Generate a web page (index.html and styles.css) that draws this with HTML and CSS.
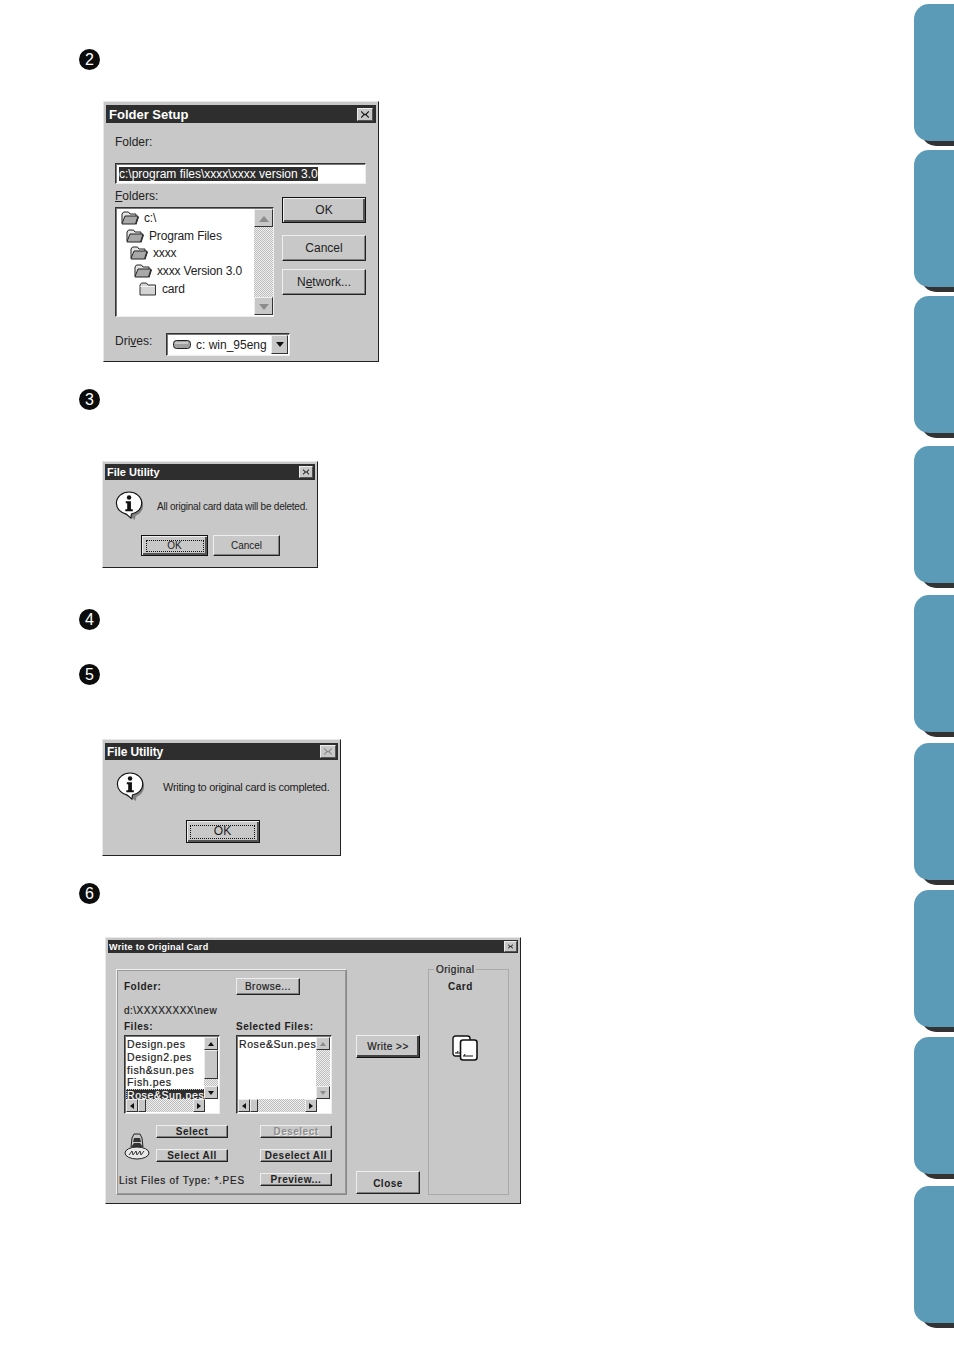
FILE: index.html
```html
<!DOCTYPE html>
<html lang="en">

<head>
    <meta charset="UTF-8">
    <link rel="stylesheet" href="styles.css">
    <title>Write to Original Card</title>
</head>

<body>
    <svg class="defs" width="0" height="0">
        <symbol id="folder-open" viewBox="0 0 18 14">
            <path d="M1 12V3l1.500-2h5L9 3h6v2" fill="#e4e4e4" stroke="#222" />
            <path d="M1 12.500l3-7.500h13l-2.500 8H1z" fill="#a8a8a8" stroke="#222" />
            <path d="M14.500 13.500l2.500-8 1 .5-2.500 7.500z" fill="#222" />
        </symbol>
        <symbol id="folder-closed" viewBox="0 0 18 14">
            <path d="M1 13V3l1.500-2h5L9 3h7.500v10z" fill="#d4d4d4" stroke="#333" />
            <path d="M1.500 4.500h14.500" stroke="#f4f4f4" />
        </symbol>
        <symbol id="info" viewBox="0 0 32 32">
            <path d="M17 3c7 0 13 5 13 12 0 6-4 10-8 11.500l-1 4.500-5-4C9 26 4 21 4 15 4 8 10 3 17 3z" fill="#808080" />
            <path d="M15 1C8 1 1.500 6 1.500 13c0 6 5 10.500 10.500 11.500l5 4.500.5-4.500c6-1 11-5.500 11-11.500C28.500 6 22 1 15 1z"
                fill="#fff" stroke="#111" stroke-width="1.200" />
            <circle cx="15" cy="6.800" r="2.400" fill="#111" />
            <path d="M11.500 11h5.500v8.500h2v2h-8v-2h2V13h-1.500z" fill="#111" />
        </symbol>
        <symbol id="x-mark" viewBox="0 0 10 8">
            <path d="M1 0l3 3h2l3-3h1v1L7 4l3 3v1H9L6 5H4L1 8H0V7l3-3-3-3V0z" fill="currentColor" />
        </symbol>
    </svg>

    <main class="page">
        <div class="badge badge-2">2</div>

        <section class="dlg folder-setup">
            <div class="titlebar">
                <span>Folder Setup</span>
                <span class="close"><svg><use href="#x-mark" /></svg></span>
            </div>
            <div class="fs-body">
                <div class="fs-label">Folder:</div>
                <div class="fs-input"><span class="fs-selected">c:\program files\xxxx\xxxx version 3.0</span></div>
                <div class="fs-main">
                    <div class="fs-left">
                        <div class="fs-label-2"><u>F</u>olders:</div>
                        <div class="tree">
                            <div class="tree-rows">
                                <div class="tree-row lvl0"><svg class="folder"><use href="#folder-open" /></svg>c:\</div>
                                <div class="tree-row lvl1"><svg class="folder"><use href="#folder-open" /></svg>Program Files</div>
                                <div class="tree-row lvl2"><svg class="folder"><use href="#folder-open" /></svg>xxxx</div>
                                <div class="tree-row lvl3"><svg class="folder"><use href="#folder-open" /></svg>xxxx Version 3.0</div>
                                <div class="tree-row lvl4"><svg class="folder"><use href="#folder-closed" /></svg>card</div>
                            </div>
                            <div class="vscroll fs-scroll">
                                <span class="arrow up off"></span>
                                <span class="dither"></span>
                                <span class="arrow down off"></span>
                            </div>
                        </div>
                    </div>
                    <div class="fs-buttons">
                        <div class="btn btn-default">OK</div>
                        <div class="btn">Cancel</div>
                        <div class="btn">N<u>e</u>twork...</div>
                    </div>
                </div>
                <div class="fs-drives">
                    <div class="fs-drives-label">Dri<u>v</u>es:</div>
                    <div class="combo">
                        <svg class="drive" viewBox="0 0 18 9">
                            <rect x=".5" y=".5" width="17" height="8" rx="3" fill="#a0a0a0" stroke="#222" />
                            <path d="M2 3h13" stroke="#f0f0f0" />
                        </svg>
                        <span>c: win_95eng</span>
                        <span class="arrow down combo-arrow"></span>
                    </div>
                </div>
            </div>
        </section>

        <div class="badge badge-3">3</div>

        <section class="dlg util-delete">
            <div class="titlebar small">
                <span>File Utility</span>
                <span class="close"><svg><use href="#x-mark" /></svg></span>
            </div>
            <div class="msg">
                <svg class="info"><use href="#info" /></svg>
                <span class="msg-text">All original card data will be deleted.</span>
            </div>
            <div class="msg-buttons">
                <div class="btn btn-default btn-focus"><span>OK</span></div>
                <div class="btn">Cancel</div>
            </div>
        </section>

        <div class="badge badge-4">4</div>
        <div class="badge badge-5">5</div>

        <section class="dlg util-done">
            <div class="titlebar">
                <span>File Utility</span>
                <span class="close close-off"><svg><use href="#x-mark" /></svg></span>
            </div>
            <div class="msg">
                <svg class="info"><use href="#info" /></svg>
                <span class="msg-text">Writing to original card is completed.</span>
            </div>
            <div class="msg-buttons">
                <div class="btn btn-default btn-focus"><span>OK</span></div>
            </div>
        </section>

        <div class="badge badge-6">6</div>

        <section class="dlg write-card">
            <div class="titlebar tiny">
                <span>Write to Original Card</span>
                <span class="close"><svg><use href="#x-mark" /></svg></span>
            </div>
            <div class="wc-body">
                <div class="wc-group">
                    <div class="wc-top">
                        <div class="wc-strong">Folder:</div>
                        <div class="btn">Browse...</div>
                        <div class="wc-path">d:\XXXXXXXX\new</div>
                        <div class="wc-strong">Files:</div>
                        <div class="wc-strong">Selected Files:</div>
                        <div class="list">
                            <div class="list-items">
                                <div>Design.pes</div>
                                <div>Design2.pes</div>
                                <div>fish&amp;sun.pes</div>
                                <div>Fish.pes</div>
                                <div class="list-selected">Rose&amp;Sun.pes</div>
                            </div>
                            <div class="vscroll">
                                <span class="arrow up"></span>
                                <span class="thumb"></span>
                                <span class="dither"></span>
                                <span class="arrow down"></span>
                            </div>
                            <div class="hscroll">
                                <span class="arrow left"></span>
                                <span class="thumb"></span>
                                <span class="dither"></span>
                                <span class="arrow right"></span>
                            </div>
                        </div>
                        <div class="list">
                            <div class="list-items">
                                <div>Rose&amp;Sun.pes</div>
                            </div>
                            <div class="vscroll">
                                <span class="arrow up off"></span>
                                <span class="dither"></span>
                                <span class="arrow down off"></span>
                            </div>
                            <div class="hscroll">
                                <span class="arrow left"></span>
                                <span class="thumb"></span>
                                <span class="dither"></span>
                                <span class="arrow right"></span>
                            </div>
                        </div>
                    </div>
                    <div class="wc-actions">
                        <svg class="logo" viewBox="0 0 26 30">
                            <path d="M10 2h6l2 4 1 9H7l1-9z" fill="#c8c8c8" stroke="#222" />
                            <path d="M10 6h6l1 4H9zM7 15l3-4h6l3 4z" fill="#333" />
                            <ellipse cx="13" cy="21" rx="12" ry="6" fill="#e8e8e8" stroke="#222" />
                            <path d="M5 23l3-4 1 4 3-4 1 4 3-4 1 4 3-4" fill="none" stroke="#333" />
                        </svg>
                        <div class="btn wc-strong-btn">Select</div>
                        <div class="btn btn-off wc-strong-btn">Deselect</div>
                        <div class="btn wc-strong-btn">Select All</div>
                        <div class="btn wc-strong-btn">Deselect All</div>
                        <div class="wc-types">List Files of Type: *.PES</div>
                        <div class="btn wc-strong-btn">Preview...</div>
                    </div>
                </div>
                <div class="wc-mid">
                    <div class="btn btn-write">Write &gt;&gt;</div>
                    <div class="btn btn-close wc-strong-btn">Close</div>
                </div>
                <div class="wc-card">
                    <div class="wc-legend">Original</div>
                    <div class="wc-card-title">Card</div>
                    <svg class="card-icon" viewBox="0 0 26 26">
                        <rect x="1" y="1" width="17" height="20" rx="2.500" fill="#fff" stroke="#111" stroke-width="1.400" />
                        <path d="M3 18h5M5 18l1-2" stroke="#111" />
                        <rect x="8.500" y="5" width="16.500" height="20" rx="2.500" fill="#fff" stroke="#111" stroke-width="1.600" />
                        <path d="M11 21h10M12 21l1-2" stroke="#111" />
                    </svg>
                </div>
            </div>
        </section>
    </main>

    <aside class="tabs">
        <div class="tab"></div>
        <div class="tab"></div>
        <div class="tab"></div>
        <div class="tab tab-gap-13"></div>
        <div class="tab tab-gap-12"></div>
        <div class="tab tab-gap-11"></div>
        <div class="tab tab-gap-10"></div>
        <div class="tab tab-gap-10"></div>
        <div class="tab tab-gap-12"></div>
    </aside>
</body>

</html>
```

FILE: styles.css
```css
* {
    box-sizing: border-box;
}

body {
    margin: 0;
    display: flex;
    height: 1348px;
    overflow: hidden;
    background: #fff;
    color: #222;
    font-family: "Liberation Sans", Arial, sans-serif;
    font-size: 12px;
}

.defs {
    position: absolute;
}

.page {
    flex: 1;
    padding-left: 79px;
}

/* step numbers */
.badge {
    width: 21px;
    height: 21px;
    border-radius: 50%;
    background: #0c0c0c;
    color: #fff;
    font-size: 16px;
    line-height: 21px;
    text-align: center;
}

.badge-2 {
    margin-top: 49px;
}

.badge-3 {
    margin-top: 27px;
}

.badge-4 {
    margin-top: 41px;
}

.badge-5 {
    margin-top: 34px;
}

.badge-6 {
    margin-top: 27px;
}

/* side tabs */
.tabs {
    width: 40px;
    padding-top: 4px;
    display: flex;
    flex-direction: column;
}

.tab {
    height: 137px;
    margin-bottom: 9px;
    flex: none;
    background: #5b9bb8;
    border-radius: 15px 0 0 15px;
    box-shadow: 7px 5px 0 #333;
}

.tab-gap-13 {
    margin-top: 4px;
}

.tab-gap-12 {
    margin-top: 3px;
}

.tab-gap-11 {
    margin-top: 2px;
}

.tab-gap-10 {
    margin-top: 1px;
}

/* windows chrome */
.dlg {
    background: #c8c8c8;
    border: 1px solid;
    border-color: #e8e8e8 #222 #222 #e8e8e8;
    padding: 2px 2px 0;
}

.titlebar {
    display: flex;
    justify-content: space-between;
    align-items: center;
    height: 18px;
    padding: 0 3px 0 3px;
    background: #2e2e2e;
    color: #fff;
    font-size: 13px;
    font-weight: bold;
}

.titlebar.small {
    height: 16px;
    padding: 0 2px;
    font-size: 11px;
}

.titlebar.tiny {
    height: 13px;
    padding: 0 1px;
    font-size: 9px;
    letter-spacing: .3px;
}

.close {
    display: block;
    width: 16px;
    height: 13px;
    padding: 2px 3px;
    background: #c8c8c8;
    color: #111;
    border: 1px solid;
    border-color: #eee #555 #555 #eee;
}

.close svg {
    display: block;
    width: 100%;
    height: 100%;
}

.small .close {
    width: 14px;
    height: 12px;
}

.tiny .close {
    width: 13px;
    height: 11px;
}

.close-off {
    color: #8c8c8c;
}

.btn {
    display: flex;
    align-items: center;
    justify-content: center;
    background: #c8c8c8;
    border: 1px solid;
    border-color: #eee #222 #222 #eee;
    box-shadow: inset -1px -1px 0 #808080;
    white-space: nowrap;
}

.btn-default {
    border: 1px solid #111;
    box-shadow: inset 1px 1px 0 #eee, inset -2px -2px 0 #555;
}

.btn-focus span {
    display: flex;
    align-items: center;
    justify-content: center;
    width: calc(100% - 7px);
    height: calc(100% - 7px);
    padding-bottom: 1px;
    border: 1px dotted #111;
}

.btn-off {
    color: #8e8e8e;
    text-shadow: 1px 1px 0 #eee;
}

.arrow {
    flex: none;
    display: block;
    position: relative;
    background: #c8c8c8;
    border: 1px solid;
    border-color: #eee #333 #333 #eee;
}

.arrow::after {
    content: "";
    position: absolute;
    left: 50%;
    top: 50%;
    border: 3px solid transparent;
}

.arrow.up::after {
    margin: -5px 0 0 -3px;
    border-bottom: 4px solid #111;
}

.arrow.down::after {
    margin: -2px 0 0 -3px;
    border-top: 4px solid #111;
}

.arrow.left::after {
    margin: -3px 0 0 -5px;
    border-right: 4px solid #111;
}

.arrow.right::after {
    margin: -3px 0 0 -2px;
    border-left: 4px solid #111;
}

.arrow.off.up::after {
    border-bottom-color: #8c8c8c;
}

.arrow.off.down::after {
    border-top-color: #8c8c8c;
}

.dither {
    flex: 1;
    display: block;
    background: repeating-conic-gradient(#bcbcbc 0 25%, #f0f0f0 0 50%) 0 0 / 2px 2px;
}

.thumb {
    flex: none;
    display: block;
    background: #c8c8c8;
    border: 1px solid;
    border-color: #eee #333 #333 #eee;
}

/* step 2 */
.folder-setup {
    width: 276px;
    height: 261px;
    margin: 31px 0 0 24px;
    padding-top: 3px;
}

.fs-body {
    padding: 11px 0 0 9px;
}

.fs-label {
    line-height: 16px;
}

.fs-input {
    width: 251px;
    height: 21px;
    margin-top: 13px;
    padding: 3px 3px;
    background: #fff;
    border: 1px solid;
    border-color: #333 #eee #eee #333;
    box-shadow: inset 1px 1px 0 #777;
}

.fs-selected {
    display: inline-block;
    background: #2e2e2e;
    color: #fff;
    line-height: 14px;
    white-space: nowrap;
}

.fs-main {
    display: flex;
    gap: 8px;
    margin-top: 5px;
}

.fs-left {
    width: 159px;
}

.fs-label-2 {
    height: 18px;
    line-height: 15px;
}

.tree {
    display: flex;
    height: 110px;
    background: #fff;
    border: 1px solid;
    border-color: #333 #eee #eee #333;
    box-shadow: inset 1px 1px 0 #777;
}

.tree-rows {
    flex: 1;
    padding-top: 1px;
}

.tree-row {
    display: flex;
    align-items: center;
    gap: 5px;
    height: 17.800px;
    letter-spacing: -.15px;
    white-space: nowrap;
}

.folder {
    width: 18px;
    height: 14px;
    flex: none;
}

.lvl0 {
    padding-left: 5px;
}

.lvl1 {
    padding-left: 10px;
}

.lvl2 {
    padding-left: 14px;
}

.lvl3 {
    padding-left: 18px;
}

.lvl4 {
    padding-left: 23px;
}

.fs-buttons {
    width: 84px;
    padding-top: 8px;
}

.fs-buttons .btn {
    height: 26px;
}

.fs-buttons .btn + .btn {
    margin-top: 12px;
}

.fs-buttons .btn + .btn + .btn {
    margin-top: 8px;
}

.fs-drives {
    display: flex;
    align-items: flex-start;
    margin-top: 16px;
    line-height: 16px;
}

.fs-drives-label {
    width: 51px;
}

.combo {
    display: flex;
    align-items: center;
    width: 124px;
    height: 23px;
    padding-left: 6px;
    background: #fff;
    border: 1px solid;
    border-color: #333 #eee #eee #333;
    box-shadow: inset 1px 1px 0 #777;
}

.drive {
    width: 18px;
    height: 9px;
    margin-right: 5px;
}

.combo-arrow {
    width: 17px;
    height: 19px;
    margin-left: auto;
    margin-right: 1px;
}

.combo-arrow.down::after {
    margin: -3px 0 0 -4px;
    border-width: 4px;
    border-top-width: 5px;
}

/* steps 3 and 5 */
.util-delete {
    width: 216px;
    height: 107px;
    margin: 51px 0 0 23px;
    font-size: 10px;
}

.util-done {
    width: 239px;
    height: 117px;
    margin: 54px 0 0 23px;
    padding-top: 3px;
    font-size: 12px;
}

.util-done .titlebar {
    height: 17px;
    padding: 0 2px;
    font-size: 12px;
    letter-spacing: -.1px;
}

.msg {
    display: flex;
    align-items: center;
}

.msg-text {
    white-space: nowrap;
}

.util-delete .msg {
    gap: 12px;
    padding: 11px 0 0 10px;
}

.util-delete .msg-text {
    letter-spacing: -.23px;
}

.util-done .msg {
    gap: 17px;
    padding: 12px 0 0 11px;
}

.util-done .msg-text {
    font-size: 11px;
    letter-spacing: -.28px;
}

.info {
    flex: none;
    width: 30px;
    height: 30px;
}

.msg-buttons {
    display: flex;
    justify-content: center;
}

.util-delete .msg-buttons {
    gap: 5px;
    margin: 14px 0 0 1px;
}

.util-delete .btn {
    width: 67px;
    height: 21px;
}

.util-done .msg-buttons {
    margin: 18px 0 0 2px;
}

.util-done .btn {
    width: 74px;
    height: 23px;
}

/* step 6 */
.write-card {
    width: 416px;
    height: 267px;
    margin: 33px 0 0 26px;
    font-size: 10px;
    letter-spacing: .5px;
    -webkit-text-stroke: .2px;
}

.write-card .titlebar {
    -webkit-text-stroke: 0;
}

.wc-body {
    display: flex;
    padding: 16px 0 0 8px;
}

.wc-group {
    width: 231px;
    height: 226px;
    padding: 8px 0 0 7px;
    border: 1px solid;
    border-color: #f0f0f0 #888 #888 #f0f0f0;
    outline: 1px solid #999;
    outline-offset: -2px;
}

.wc-top {
    display: grid;
    grid-template-columns: 112px 96px;
    grid-template-rows: 17px 22px 18px 79px;
    align-items: center;
}

.wc-strong,
.wc-strong-btn {
    font-weight: bold;
    -webkit-text-stroke: 0;
}

.wc-top .btn {
    width: 64px;
    height: 17px;
}

.wc-path {
    grid-column: 1 / 3;
    padding-top: 8px;
}

.list {
    position: relative;
    align-self: stretch;
    width: 96px;
    background: #fff;
    border: 1px solid;
    border-color: #333 #eee #eee #333;
    box-shadow: inset 1px 1px 0 #777;
    font-size: 10.500px;
    letter-spacing: .6px;
    overflow: hidden;
}

.list-items {
    padding: 2px 0 0 2px;
    line-height: 12.800px;
    height: 64px;
    width: 80px;
    white-space: nowrap;
    overflow: hidden;
}

.list-selected {
    margin: 0 0 0 -1px;
    padding-left: 1px;
    background: #2e2e2e;
    color: #fff;
    outline: 1px dotted #ccc;
    outline-offset: -1px;
}

.vscroll {
    position: absolute;
    top: 1px;
    right: 1px;
    bottom: 14px;
    width: 14px;
    display: flex;
    flex-direction: column;
}

.vscroll .arrow {
    height: 13px;
}

.vscroll .thumb {
    height: 29px;
}

.fs-scroll {
    position: static;
    width: 19px;
    margin: 1px 0;
}

.fs-scroll .arrow {
    height: 18px;
}

.fs-scroll .arrow.up::after {
    margin: -7px 0 0 -5px;
    border-width: 5px;
    border-bottom-width: 6px;
}

.fs-scroll .arrow.down::after {
    margin: -2px 0 0 -5px;
    border-width: 5px;
    border-top-width: 6px;
}

.hscroll {
    position: absolute;
    left: 1px;
    right: 14px;
    bottom: 1px;
    height: 13px;
    display: flex;
}

.hscroll .arrow {
    width: 12px;
}

.hscroll .thumb {
    width: 8px;
}

.wc-actions {
    display: grid;
    grid-template-columns: 32px 72px 32px 72px;
    grid-template-rows: 17px 17px 17px;
    gap: 7px 0;
    margin-top: 9px;
    align-items: center;
}

.wc-actions .btn:nth-of-type(even) {
    grid-column: 4;
}

.logo {
    grid-row: 1 / 3;
    width: 26px;
    height: 30px;
    margin-top: 6px;
}

.wc-types {
    grid-column: 1 / 3;
    margin-left: -5px;
    padding-top: 1px;
    letter-spacing: .75px;
    white-space: nowrap;
}

.wc-mid {
    width: 81px;
    padding: 66px 0 0 9px;
    display: flex;
    flex-direction: column;
}

.wc-mid .btn {
    width: 64px;
}

.btn-write {
    height: 23px;
    border-color: #eee #111 #111 #eee;
    box-shadow: inset -2px -2px 0 #444;
}

.btn-close {
    height: 23px;
    margin-top: 113px;
    padding-top: 1px;
}

.wc-card {
    position: relative;
    width: 81px;
    height: 226px;
    display: flex;
    flex-direction: column;
    align-items: flex-start;
    border: 1px solid #aaa;
    font-weight: bold;
    -webkit-text-stroke: 0;
}

.wc-legend {
    position: absolute;
    top: -7px;
    padding: 0 2px;
    left: 5px;
    background: #c8c8c8;
    line-height: 14px;
    font-weight: normal;
    -webkit-text-stroke: .2px;
}

.wc-card-title {
    margin: 10px 0 0 19px;
    line-height: 14px;
}

.card-icon {
    width: 26px;
    height: 26px;
    margin: 41px 0 0 23px;
}
```
